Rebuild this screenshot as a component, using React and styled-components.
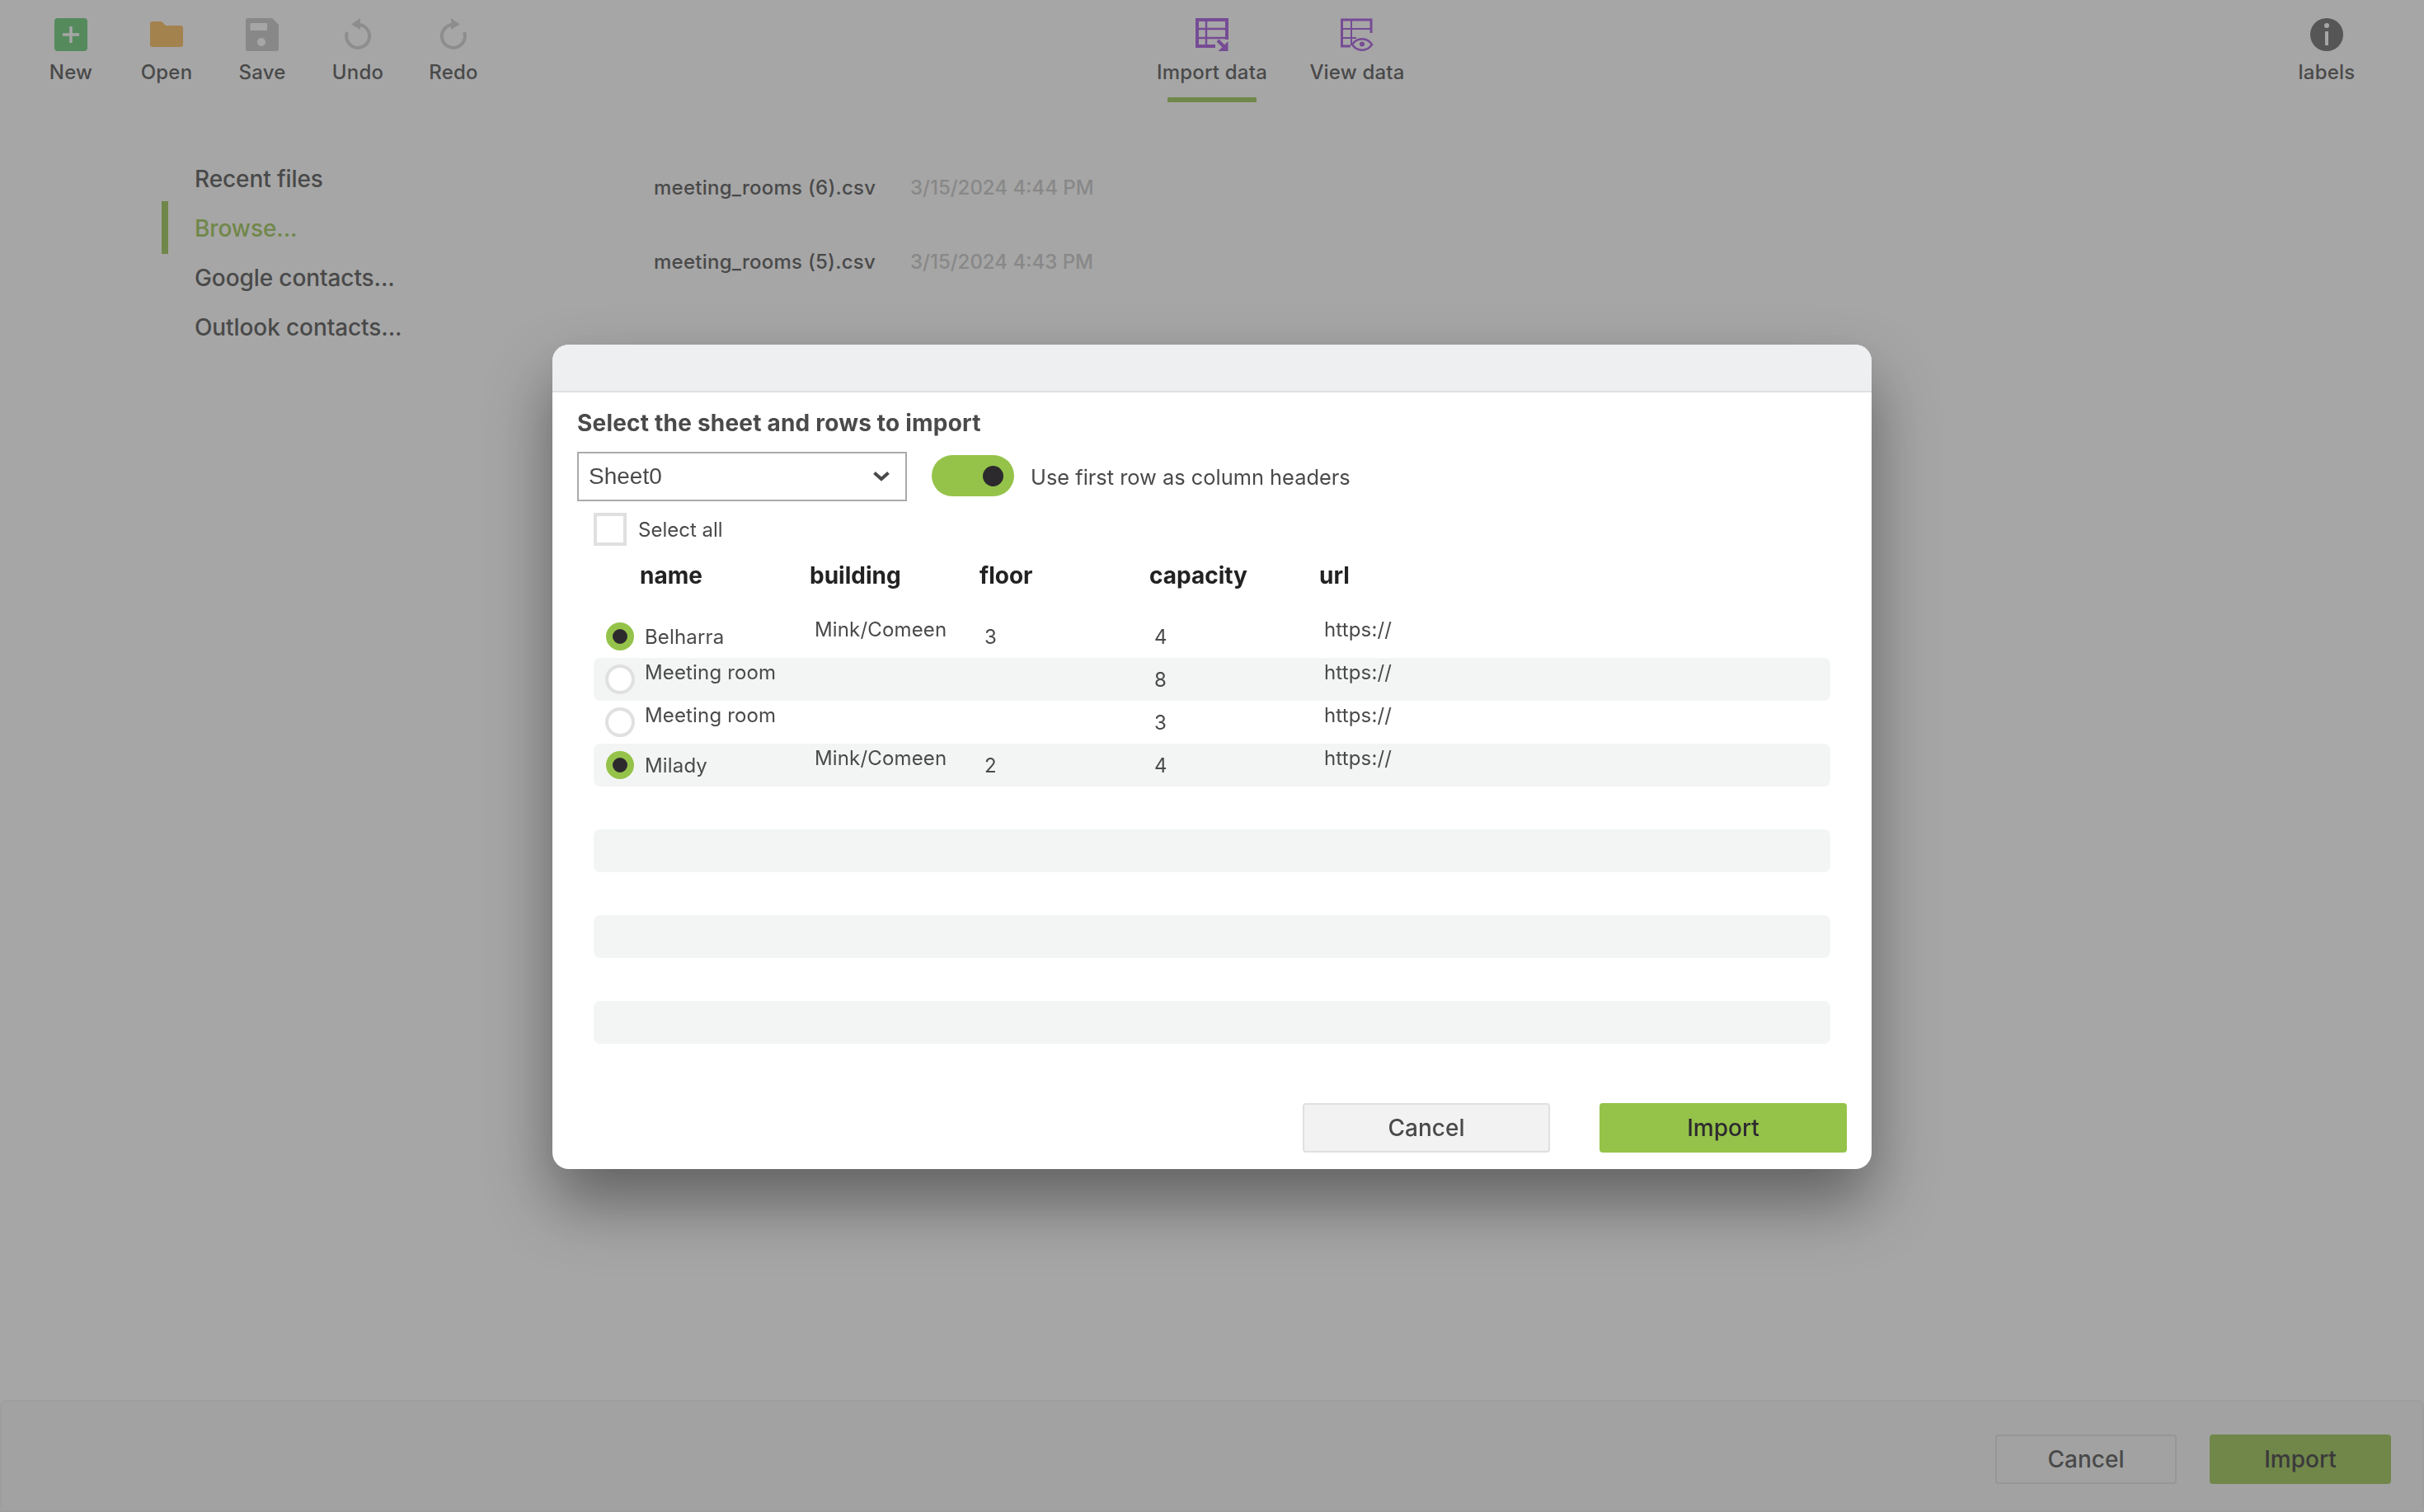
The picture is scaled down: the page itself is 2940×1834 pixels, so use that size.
import React from "react";
import styled, { createGlobalStyle } from "styled-components";

const GlobalStyle = createGlobalStyle`
  html, body {
    margin: 0;
    padding: 0;
    background: #fff;
  }
  body {
    font-family: Inter, "Liberation Sans", sans-serif;
    color: #4a4a4a;
  }
`;

const Page = styled.div`
  display: flex;
  flex-direction: column;
  height: 1834px;
  overflow: hidden;
`;

const Toolbar = styled.header`
  display: flex;
  height: 124px;
  flex-shrink: 0;
  padding-left: 28px;
`;

const ToolGroup = styled.div`
  display: flex;
  width: ${(p) => p.$width || "auto"};
  margin-left: ${(p) => (p.$right ? "auto" : "0")};
  padding-right: ${(p) => (p.$right ? "60px" : "0")};
`;

const Tool = styled.div`
  display: flex;
  flex-direction: column;
  align-items: center;
  width: ${(p) => p.$width || "116px"};
  padding-top: 22px;
`;

const ToolIcon = styled.svg`
  display: block;
  width: 40px;
  height: 40px;
  transform: ${(p) => (p.$flip ? "scaleX(-1)" : "none")};
`;

const ToolLabel = styled.span`
  margin-top: 12px;
  font-size: 24px;
  line-height: 28px;
  font-weight: 500;
  letter-spacing: 0.2px;
`;

const TabMark = styled.div`
  width: 108px;
  height: 6px;
  margin-top: 16px;
  background: #95c34a;
`;

const Content = styled.main`
  display: flex;
  flex: 1;
  padding: 58px 0 0 196px;
`;

const SideNav = styled.nav`
  width: 597px;
  padding-top: 5px;
`;

const NavItem = styled.div`
  position: relative;
  height: 60px;
  padding-left: 40px;
  font-size: 28px;
  line-height: 60px;
  font-weight: 500;
  letter-spacing: -0.1px;
  color: ${(p) => (p.$active ? "#95c34a" : "#4a4a4a")};

  &::before {
    content: "";
    display: ${(p) => (p.$active ? "block" : "none")};
    position: absolute;
    left: 0;
    top: -3px;
    width: 8px;
    height: 64px;
    background: #95c34a;
  }
`;

const FileList = styled.div`
  display: flex;
  flex-direction: column;
`;

const FileRow = styled.div`
  display: flex;
  align-items: center;
  height: 90px;
  font-size: 24px;
  font-weight: 500;
`;

const FileName = styled.span`
  width: 311px;
  letter-spacing: 0.25px;
`;

const FileDate = styled.span`
  color: #c4c4c4;
`;

const Footer = styled.footer`
  display: flex;
  justify-content: flex-end;
  gap: 40px;
  height: 136px;
  flex-shrink: 0;
  box-sizing: border-box;
  padding: 40px 38px 0 0;
  background: #f8f8f8;
  border: 2px solid #f0f0f0;
  border-radius: 8px 8px 0 0;
`;

const Button = styled.button`
  box-sizing: border-box;
  width: ${(p) => p.$width};
  height: 60px;
  padding: 0;
  border-radius: 4px;
  border: ${(p) => (p.$primary ? "none" : "2px solid #e0e0e0")};
  background: ${(p) => (p.$primary ? "#95c34a" : p.$plain ? "transparent" : "#f2f2f2")};
  color: ${(p) => (p.$primary ? "#2d2a2e" : "#4a4a4a")};
  font-family: inherit;
  font-size: 28px;
  font-weight: 500;
`;

const Overlay = styled.div`
  position: fixed;
  inset: 0;
  display: flex;
  align-items: center;
  justify-content: center;
  background: rgba(74, 74, 74, 0.49);
`;

const Modal = styled.section`
  display: flex;
  flex-direction: column;
  width: 1600px;
  height: 1000px;
  margin-top: 2px;
  background: #fff;
  border-radius: 20px;
  overflow: hidden;
  box-shadow: 0 40px 80px rgba(0, 0, 0, 0.42);
`;

const ModalHeader = styled.div`
  box-sizing: border-box;
  height: 58px;
  flex-shrink: 0;
  background: #eeeff0;
  border-bottom: 2px solid #e0e0e0;
`;

const ModalBody = styled.div`
  display: flex;
  flex-direction: column;
  padding: 20px 30px 0;
`;

const Title = styled.h2`
  margin: 0 0 18px;
  font-size: 28px;
  line-height: 34px;
  font-weight: 700;
  letter-spacing: 0.2px;
  color: #4a4a4a;
`;

const ControlRow = styled.div`
  display: flex;
  align-items: center;
`;

const SheetSelect = styled.div`
  display: flex;
  align-items: center;
  justify-content: space-between;
  box-sizing: border-box;
  width: 400px;
  height: 60px;
  padding: 0 19px 0 12px;
  border: 2px solid #aaa;
  font-family: "Liberation Sans", Arial, sans-serif;
  font-size: 28px;
`;

const Chevron = styled.svg`
  display: block;
  width: 20px;
  height: 14px;
`;

const Toggle = styled.div`
  display: flex;
  align-items: center;
  justify-content: flex-end;
  box-sizing: border-box;
  width: 100px;
  height: 50px;
  margin: -2px 20px 0 30px;
  padding-right: 13px;
  border-radius: 25px;
  background: #95c34a;

  &::after {
    content: "";
    width: 25px;
    height: 25px;
    border-radius: 50%;
    background: #2d2a2e;
  }
`;

const ToggleLabel = styled.span`
  font-size: 25.4px;
`;

const SelectAll = styled.label`
  display: flex;
  align-items: center;
  gap: 14px;
  margin: 14px 0 19px 20px;
  font-size: 24px;
`;

const CheckBox = styled.span`
  box-sizing: border-box;
  width: 40px;
  height: 40px;
  border: 4px solid #e0e0e0;
`;

const HeadRow = styled.div`
  display: grid;
  grid-template-columns: 56px 206px 206px 206px 206px 1fr;
  margin: 0 0 31px 20px;
  font-size: 28px;
  line-height: 34px;
  font-weight: 700;
  color: #222;
`;

const Rows = styled.div`
  display: flex;
  flex-direction: column;
  margin-left: 20px;
  width: 1500px;
`;

const Row = styled.div`
  display: grid;
  grid-template-columns: 62px 206px 206px 206px 206px 1fr;
  align-items: center;
  height: 52px;
  border-radius: 8px;
  background: ${(p) => (p.$striped ? "#f3f5f5" : "transparent")};
  font-size: 24px;
  letter-spacing: 0.15px;
`;

const RadioCell = styled.div`
  display: flex;
  padding-left: 14px;
`;

const Radio = styled.span`
  box-sizing: border-box;
  width: ${(p) => (p.$checked ? "34px" : "36px")};
  height: ${(p) => (p.$checked ? "34px" : "36px")};
  margin: ${(p) => (p.$checked ? "0 1px" : "0")};
  border-radius: 50%;
  border: ${(p) => (p.$checked ? "8px solid #95c34a" : "4px solid #e0e0e0")};
  background: ${(p) => (p.$checked ? "#2d2a2e" : "#fff")};
`;

const Cell = styled.div`
  padding-bottom: ${(p) => (p.$raised ? "17px" : "0")};
  white-space: nowrap;
`;

const ModalActions = styled.div`
  display: flex;
  justify-content: flex-end;
  gap: 60px;
  margin-top: 72px;
`;

const PURPLE = "#a14fde";

function NewIcon() {
  return (
    <ToolIcon viewBox="0 0 40 40">
      <rect width="40" height="40" rx="4" fill="#60c871" />
      <path d="M20 10v20M10 20h20" stroke="#fff" strokeWidth="3.5" />
    </ToolIcon>
  );
}

function FolderIcon() {
  return (
    <ToolIcon viewBox="0 0 40 40">
      <path
        d="M0 7a3 3 0 0 1 3-3h10a3 3 0 0 1 2 1l4 4h18a3 3 0 0 1 3 3v20a3 3 0 0 1-3 3H3a3 3 0 0 1-3-3z"
        fill="#f9b852"
      />
    </ToolIcon>
  );
}

function SaveIcon() {
  return (
    <ToolIcon viewBox="0 0 40 40">
      <path
        d="M3 0h29l8 8v29a3 3 0 0 1-3 3H3a3 3 0 0 1-3-3V3a3 3 0 0 1 3-3z"
        fill="#c4c4c4"
      />
      <rect x="5.5" y="6" width="20.5" height="9" fill="#fff" />
      <circle cx="19" cy="29" r="5" fill="#fff" />
    </ToolIcon>
  );
}

function HistoryIcon({ flip }) {
  return (
    <ToolIcon viewBox="0 0 40 40" $flip={flip}>
      <path
        d="M22 8A14 14 0 1 1 7 17"
        fill="none"
        stroke="#cfcfcf"
        strokeWidth="4"
      />
      <path d="M23 0v14L12 7.5z" fill="#cfcfcf" />
    </ToolIcon>
  );
}

function ImportIcon() {
  return (
    <ToolIcon viewBox="0 0 40 40">
      <g fill="none" stroke={PURPLE}>
        <path d="M38 26V2H2v32h22" strokeWidth="4" />
        <path d="M13 3v30M3 13h34M3 24h34" strokeWidth="2.5" />
        <path d="M27 27l8 8" strokeWidth="4" />
      </g>
      <path d="M39.5 28v12h-12z" fill={PURPLE} />
    </ToolIcon>
  );
}

function ViewIcon() {
  return (
    <ToolIcon viewBox="0 0 40 40">
      <g fill="none" stroke={PURPLE}>
        <path d="M37 18V2H1.5v32H12" strokeWidth="3" />
        <path d="M13 3v30M3 13h33M3 24h16" strokeWidth="2" />
        <path d="M14 32c6-9 18-9 24 0-6 9-18 9-24 0z" strokeWidth="2.5" />
      </g>
      <circle cx="26" cy="31.5" r="3" fill={PURPLE} />
    </ToolIcon>
  );
}

function InfoIcon() {
  return (
    <ToolIcon viewBox="0 0 40 40">
      <circle cx="20" cy="20" r="20" fill="#626262" />
      <circle cx="20" cy="9" r="3" fill="#fff" />
      <rect x="18" y="16" width="4" height="17" fill="#fff" />
    </ToolIcon>
  );
}

const leftTools = [
  { label: "New", icon: <NewIcon /> },
  { label: "Open", icon: <FolderIcon /> },
  { label: "Save", icon: <SaveIcon /> },
  { label: "Undo", icon: <HistoryIcon /> },
  { label: "Redo", icon: <HistoryIcon flip /> },
];

const navItems = ["Recent files", "Browse...", "Google contacts...", "Outlook contacts..."];

const files = [
  { name: "meeting_rooms (6).csv", date: "3/15/2024 4:44 PM" },
  { name: "meeting_rooms (5).csv", date: "3/15/2024 4:43 PM" },
];

const columns = ["name", "building", "floor", "capacity", "url"];

const rows = [
  { name: "Belharra", building: "Mink/Comeen", floor: "3", capacity: "4", checked: true },
  { name: "Meeting room", capacity: "8" },
  { name: "Meeting room", capacity: "3" },
  { name: "Milady", building: "Mink/Comeen", floor: "2", capacity: "4", checked: true },
];

function App() {
  return (
    <>
      <GlobalStyle />
      <Page>
        <Toolbar>
          <ToolGroup $width="1354px">
            {leftTools.map((t) => (
              <Tool key={t.label}>
                {t.icon}
                <ToolLabel>{t.label}</ToolLabel>
              </Tool>
            ))}
          </ToolGroup>
          <ToolGroup>
            <Tool $width="176px">
              <ImportIcon />
              <ToolLabel>Import data</ToolLabel>
              <TabMark />
            </Tool>
            <Tool $width="176px">
              <ViewIcon />
              <ToolLabel>View data</ToolLabel>
            </Tool>
          </ToolGroup>
          <ToolGroup $right>
            <Tool>
              <InfoIcon />
              <ToolLabel>labels</ToolLabel>
            </Tool>
          </ToolGroup>
        </Toolbar>

        <Content>
          <SideNav>
            {navItems.map((item) => (
              <NavItem key={item} $active={item === "Browse..."}>
                {item}
              </NavItem>
            ))}
          </SideNav>
          <FileList>
            {files.map((f) => (
              <FileRow key={f.name}>
                <FileName>{f.name}</FileName>
                <FileDate>{f.date}</FileDate>
              </FileRow>
            ))}
          </FileList>
        </Content>

        <Footer>
          <Button $plain $width="220px">Cancel</Button>
          <Button $primary $width="220px">Import</Button>
        </Footer>
      </Page>

      <Overlay>
        <Modal>
          <ModalHeader />
          <ModalBody>
            <Title>Select the sheet and rows to import</Title>
            <ControlRow>
              <SheetSelect>
                Sheet0
                <Chevron viewBox="0 0 20 14">
                  <path d="M1.5 2.5L10 10l8.5-7.5" fill="none" stroke="#4a4a4a" strokeWidth="4" />
                </Chevron>
              </SheetSelect>
              <Toggle />
              <ToggleLabel>Use first row as column headers</ToggleLabel>
            </ControlRow>
            <SelectAll>
              <CheckBox />
              Select all
            </SelectAll>
            <HeadRow>
              <span />
              {columns.map((c) => (
                <span key={c}>{c}</span>
              ))}
            </HeadRow>
            <Rows>
              {Array.from({ length: 10 }, (_, i) => {
                const row = rows[i];
                if (!row) return <Row key={i} $striped={i % 2 === 1} />;
                return (
                  <Row key={i} $striped={i % 2 === 1}>
                    <RadioCell>
                      <Radio $checked={row.checked} />
                    </RadioCell>
                    <Cell $raised={!row.checked}>{row.name}</Cell>
                    <Cell $raised>{row.building}</Cell>
                    <Cell>{row.floor}</Cell>
                    <Cell>{row.capacity}</Cell>
                    <Cell $raised>https://</Cell>
                  </Row>
                );
              })}
            </Rows>
            <ModalActions>
              <Button $width="300px">Cancel</Button>
              <Button $primary $width="300px">Import</Button>
            </ModalActions>
          </ModalBody>
        </Modal>
      </Overlay>
    </>
  );
}

export default App;
